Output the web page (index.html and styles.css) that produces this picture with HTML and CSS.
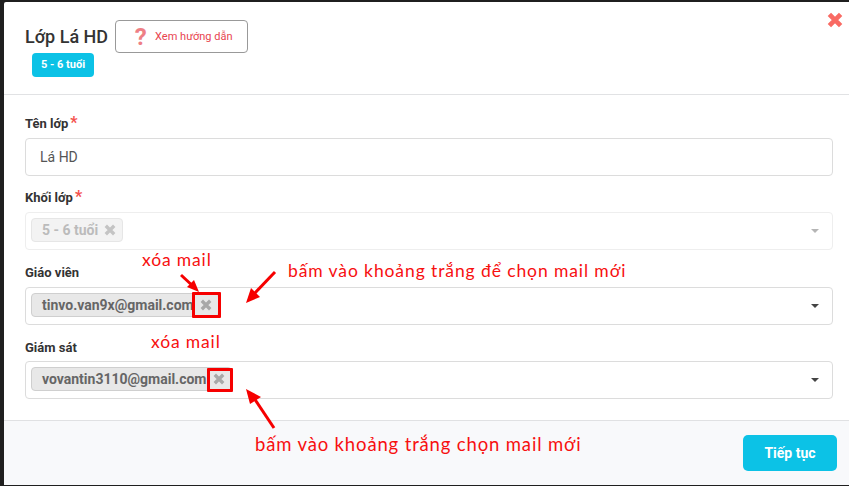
FILE: index.html
```html
<!DOCTYPE html>
<html lang="vi">
<head>
<meta charset="utf-8">
<title>Lớp Lá HD</title>
<link rel="stylesheet" href="styles.css">
</head>
<body>
<div class="modal">
  <header class="head">
    <div class="title-row">
      <h1 class="title">Lớp Lá HD</h1>
      <button class="guide"><span class="guide-q">?</span><span>Xem hướng dẫn</span></button>
    </div>
    <span class="age">5 - 6 tuổi</span>
    <svg class="close" viewBox="0 0 16 16"><path d="M3 3L13 13M13 3L3 13"/></svg>
  </header>
  <main class="body">
    <div class="field f1">
      <label class="label">Tên lớp<span class="req">*</span></label>
      <div class="input">Lá HD</div>
    </div>
    <div class="field f2">
      <label class="label">Khối lớp<span class="req">*</span></label>
      <div class="select disabled">
        <span class="chip">5 - 6 tuổi<svg class="x" viewBox="0 0 10 10"><path d="M1.5 1.5L8.5 8.5M8.5 1.5L1.5 8.5"/></svg></span>
        <span class="caret"></span>
      </div>
    </div>
    <div class="field f3">
      <label class="label">Giáo viên</label>
      <div class="select">
        <span class="chip">tinvo.van9x@gmail.com<svg class="x" viewBox="0 0 10 10"><path d="M1.5 1.5L8.5 8.5M8.5 1.5L1.5 8.5"/></svg></span>
        <span class="caret"></span>
      </div>
    </div>
    <div class="field f4">
      <label class="label">Giám sát</label>
      <div class="select">
        <span class="chip">vovantin3110@gmail.com<svg class="x" viewBox="0 0 10 10"><path d="M1.5 1.5L8.5 8.5M8.5 1.5L1.5 8.5"/></svg></span>
        <span class="caret"></span>
      </div>
    </div>
  </main>
  <footer class="foot"><button class="next">Tiếp tục</button></footer>
</div>

<span class="note n1">xóa mail</span>
<span class="note n2">bấm vào khoảng trắng để chọn mail mới</span>
<span class="note n3">xóa mail</span>
<span class="note n4">bấm vào khoảng trắng chọn mail mới</span>
<div class="box b1"></div>
<div class="box b2"></div>
<svg class="arrows" viewBox="0 0 849 486">
  <path d="M181 275L195 288"/><path class="head-a" d="M199 292L187 287L194 280Z"/>
  <path d="M275 272L254 294"/><path class="head-a" d="M246 303L251 288L260 297Z"/>
  <path d="M274 428L254 398"/><path class="head-a" d="M246 389L261 397L250 404Z"/>
</svg>
</body>
</html>
```
FILE: styles.css
```css
* { box-sizing: border-box; }
html, body { margin: 0; height: 486px; overflow: hidden; }
body { position: relative; background: #1f1f1f; font-family: Roboto, "Liberation Sans", sans-serif; color: #333; padding: 2px 0 1px 4px; }
.modal { height: 483px; background: #fff; display: flex; flex-direction: column; border-radius: 2px 0 0 2px; }
.head { position: relative; height: 93px; border-bottom: 1px solid #e1e2e4; padding: 18px 0 0 21px; }
.title-row { display: flex; align-items: center; gap: 7px; height: 33px; }
.title { margin: 0; font-size: 18px; font-weight: 500; color: #333; }
.guide { width: 133px; height: 33px; background: #fff; border: 1px solid #999; border-radius: 4px; display: flex; align-items: center; justify-content: flex-start; gap: 7px; padding: 0 0 0 17px; font: 400 11px Roboto, sans-serif; color: #e8444f; }
.guide-q { font-size: 24px; font-weight: 700; color: #ee7f85; line-height: 1; width: 15px; }
.age { display: inline-block; margin: 0 0 0 7px; position: relative; top: 0; width: 62px; height: 24px; line-height: 24px; text-align: center; background: #0cc2e6; color: #fff; font-size: 11px; font-weight: 700; border-radius: 4px; }
.close { position: absolute; top: 9px; right: 5px; width: 18px; height: 18px; }
.close path { stroke: #f96a63; stroke-width: 4.2; fill: none; }
.body { height: 326px; padding: 20px 16px 0 21px; border-bottom: 1px solid #e0e1e3; }
.field { display: flex; flex-direction: column; }
.f2 { margin-top: 13px; }
.f3 { margin-top: 14px; }
.f4 { margin-top: 14px; }
.f4 .label { height: 22px; }
.label { font-size: 13px; font-weight: 700; color: #333; height: 23px; padding-top: 1px; line-height: 16px; display: flex; align-items: flex-start; }
.req { color: #f4524d; font-size: 16px; margin-left: 2px; line-height: 14px; }
.input { height: 38px; border: 1px solid #dcdcdc; border-radius: 4px; padding-left: 14px; line-height: 36px; font-size: 14px; color: #555; }
.select { height: 38px; border: 1px solid #dcdcdc; border-radius: 4px; padding: 0 0 2px 5px; display: flex; align-items: center; justify-content: space-between; }
.chip { display: inline-flex; align-items: center; height: 24px; padding: 0 6px 1px 10px; background: #e8e8e8; border: 1px solid #cfcfcf; border-radius: 4px; font-size: 14px; font-weight: 700; color: #666; white-space: nowrap; }
.x { width: 12px; height: 12px; margin-left: 6px; }
.x path { stroke: #a8a8a8; stroke-width: 2.8; fill: none; }
.caret { width: 0; height: 0; margin: 2px 13px 0 0; border: 4px solid transparent; border-top-color: #444; border-bottom: 0; }
.disabled { border-color: #eeeeee; }
.disabled .chip { background: #f3f3f3; border-color: #e6e6e6; color: #bbb; }
.disabled .x path { stroke: #c4c4c4; }
.disabled .caret { border-top-color: #b5b5b5; }
.foot { flex: 1; background: #f8f9fb; display: flex; justify-content: flex-end; align-items: flex-start; padding: 14px 12px 0 0; }
.next { width: 94px; height: 36px; border: 0; border-radius: 5px; background: #0cc2e6; color: #fff; font: 700 14px Roboto, sans-serif; }
.note { position: absolute; font-family: Lato, "Open Sans", sans-serif; font-size: 17.5px; line-height: 20px; color: #f71010; letter-spacing: 0.85px; white-space: nowrap; }
.n1 { left: 142px; top: 250px; }
.n2 { left: 288px; top: 261px; letter-spacing: 0.9px; }
.n3 { left: 151px; top: 332px; }
.n4 { left: 255px; top: 434px; font-size: 18.5px; letter-spacing: 0.85px; }
.box { position: absolute; border: 3px solid #f60000; border-radius: 1px; }
.b1 { left: 192px; top: 292px; width: 29px; height: 26px; }
.b2 { left: 207px; top: 368px; width: 26px; height: 24px; }
.arrows { position: absolute; left: 0; top: 0; width: 849px; height: 486px; pointer-events: none; }
.arrows path { stroke: #f60000; stroke-width: 3; fill: none; }
.arrows .head-a { fill: #f60000; stroke: none; }
```
